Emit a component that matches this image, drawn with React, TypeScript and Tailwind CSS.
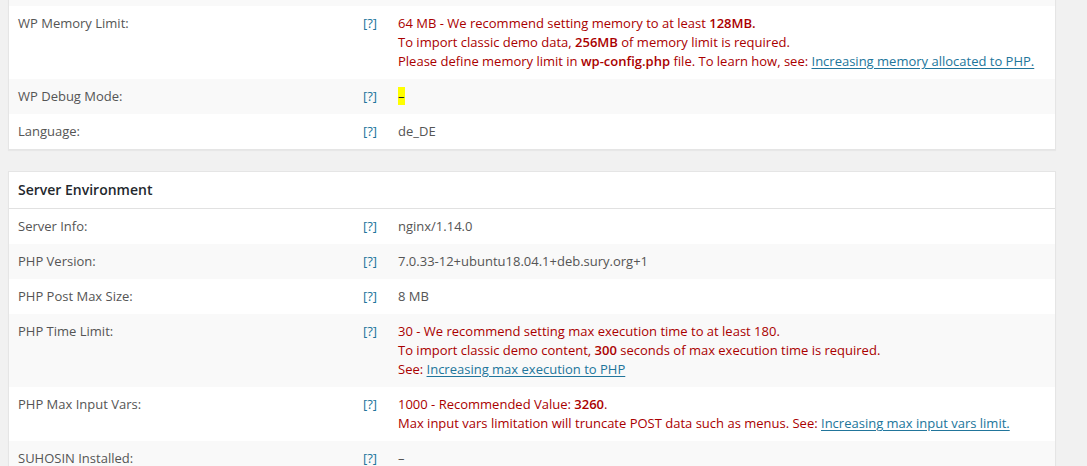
import type { ReactNode } from "react";

type Row = {
  label: string;
  value: ReactNode;
  striped?: boolean;
};

function HelpTip() {
  return <span className="text-[#21759b]">[?]</span>;
}

function DocLink({ children }: { children: ReactNode }) {
  return (
    <a href="#" className="text-[#21759b] underline underline-offset-2">
      {children}
    </a>
  );
}

function StatusRow({ label, value, striped }: Row) {
  return (
    <div
      className={`grid grid-cols-[344px_35px_1fr] py-2 ${
        striped ? "bg-[#f9f9f9]" : "bg-white"
      }`}
    >
      <div className="pl-[9px] text-[#555]">{label}</div>
      <div className="px-[10px]">
        <HelpTip />
      </div>
      <div className="pl-[10px] pr-3">{value}</div>
    </div>
  );
}

// red warning text, used for values below the theme's recommendation
function Warn({ children }: { children: ReactNode }) {
  return <div className="text-[#a00]">{children}</div>;
}

const wpRows: Row[] = [
  {
    label: "WP Memory Limit:",
    value: (
      <>
        <Warn>
          64 MB - We recommend setting memory to at least <b className="font-semibold">128MB.</b>
        </Warn>
        <Warn>
          To import classic demo data, <b className="font-semibold">256MB</b> of memory limit is
          required.
        </Warn>
        <Warn>
          Please define memory limit in <b className="font-semibold">wp-config.php</b> file. To
          learn how, see: <DocLink>Increasing memory allocated to PHP.</DocLink>
        </Warn>
      </>
    ),
  },
  {
    label: "WP Debug Mode:",
    value: <mark className="bg-[#ffff00] text-[#222] inline-block w-[7px] leading-[18px]">–</mark>,
    striped: true,
  },
  { label: "Language:", value: <span className="text-[#555]">de_DE</span> },
];

const serverRows: Row[] = [
  { label: "Server Info:", value: <span className="text-[#555]">nginx/1.14.0</span> },
  {
    label: "PHP Version:",
    value: <span className="text-[#555]">7.0.33-12+ubuntu18.04.1+deb.sury.org+1</span>,
    striped: true,
  },
  { label: "PHP Post Max Size:", value: <span className="text-[#555]">8 MB</span> },
  {
    label: "PHP Time Limit:",
    value: (
      <>
        <Warn>30 - We recommend setting max execution time to at least 180.</Warn>
        <Warn>
          To import classic demo content, <b className="font-semibold">300</b> seconds of max
          execution time is required.
        </Warn>
        <Warn>
          See: <DocLink>Increasing max execution to PHP</DocLink>
        </Warn>
      </>
    ),
    striped: true,
  },
  {
    label: "PHP Max Input Vars:",
    value: (
      <>
        <Warn>
          1000 - Recommended Value: <b className="font-semibold">3260</b>.
        </Warn>
        <Warn>
          Max input vars limitation will truncate POST data such as menus. See:{" "}
          <DocLink>Increasing max input vars limit.</DocLink>
        </Warn>
      </>
    ),
  },
  { label: "SUHOSIN Installed:", value: <span className="text-[#555]">–</span>, striped: true },
];

export default function App() {
  return (
    <div className="min-h-[466px] bg-[#f1f1f1] overflow-hidden font-['Open_Sans',sans-serif] text-[13px] leading-[19px]">
      <div className="ml-2 mr-[31px]">
        {/* WordPress environment card, scrolled so its top is out of view */}
        <div className="-mt-px bg-white border border-[#e5e5e5] shadow-[0_1px_1px_rgba(0,0,0,0.04)]">
          {/* bottom edge of the previous (striped) row */}
          <div className="h-[6px] bg-[#f9f9f9]" />
          {wpRows.map((row) => (
            <StatusRow key={row.label} {...row} />
          ))}
        </div>

        {/* Server environment card */}
        <div className="mt-[21px] bg-white border border-[#e5e5e5] shadow-[0_1px_1px_rgba(0,0,0,0.04)]">
          <h2 className="px-[9px] py-[9px] text-[14px] leading-[18px] font-semibold text-[#23282d] border-b border-[#e1e1e1]">
            Server Environment
          </h2>
          {serverRows.map((row) => (
            <StatusRow key={row.label} {...row} />
          ))}
        </div>
      </div>
    </div>
  );
}
